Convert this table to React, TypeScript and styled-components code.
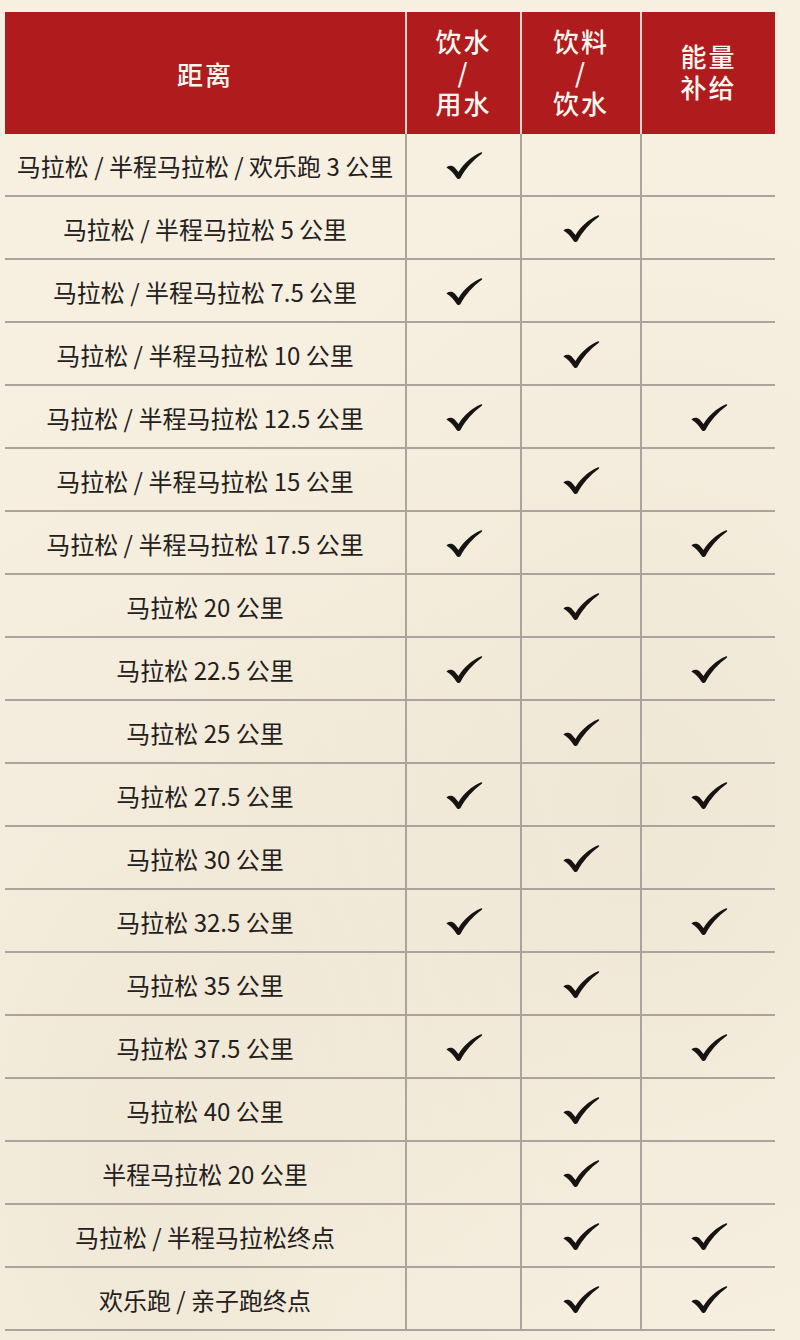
import React from "react";
import styled, { createGlobalStyle } from "styled-components";

const Global = createGlobalStyle`
  html, body { margin: 0; padding: 0; }
  body {
    background: #f7f0e1;
    font-family: "Noto Sans CJK SC", "Noto Sans", sans-serif;
  }
`;

const Page = styled.div`
  width: 800px;
  height: 1340px;
  box-sizing: border-box;
  padding: 12px 25px 0 5px;
  background:
    radial-gradient(ellipse at 80% 60%, rgba(225, 214, 190, 0.35), transparent 55%),
    radial-gradient(ellipse at 20% 85%, rgba(225, 214, 190, 0.3), transparent 50%),
    #f7f0e1;
  overflow: hidden;
`;

const Table = styled.div`
  width: 770px;
  display: flex;
  flex-direction: column;
`;

const cols = "400px 115px 120px 135px";

const HeaderRow = styled.div`
  display: grid;
  grid-template-columns: ${cols};
  height: 122px;
  background: #b01b1d;
`;

const HeadCell = styled.div<{ $first?: boolean }>`
  display: flex;
  align-items: center;
  justify-content: center;
  text-align: center;
  color: #fdf7f0;
  font-size: 26px;
  font-weight: 500;
  line-height: 31px;
  letter-spacing: 2px;
  border-left: ${(p) => (p.$first ? "none" : "2px solid #e9d6cf")};
  padding-bottom: ${(p) => (p.$first ? "0" : "4px")};
`;

const Row = styled.div`
  display: grid;
  grid-template-columns: ${cols};
  height: 63px;
  border-bottom: 2px solid #aaa59c;
  box-sizing: border-box;
`;

const Cell = styled.div<{ $first?: boolean }>`
  display: flex;
  align-items: center;
  justify-content: center;
  border-left: ${(p) => (p.$first ? "none" : "2px solid #aaa59c")};
  color: #24201c;
  font-size: 24px;
  font-weight: 400;
  padding-top: 2px;
  white-space: nowrap;
`;

const Check = () => (
  <svg width="38" height="29" viewBox="0 0 40 30">
    <path
      d="M2 16.5 C4.5 14.5 8 14.8 10.2 17 L14.2 21.8 C20 12.5 28 5.2 37.5 1.2 C39.2 0.6 39.8 1.8 38.4 2.9 C29.5 9.5 21.5 18.5 16.6 27.6 C15.6 29.6 13.2 29.7 12.1 27.8 C9.3 23.3 5.8 19.6 2.2 17.6 C1.6 17.3 1.5 16.9 2 16.5 Z"
      fill="#161412"
    />
  </svg>
);

type R = [string, boolean, boolean, boolean];
const rows: R[] = [
  ["马拉松 / 半程马拉松 / 欢乐跑 3 公里", true, false, false],
  ["马拉松 / 半程马拉松 5 公里", false, true, false],
  ["马拉松 / 半程马拉松 7.5 公里", true, false, false],
  ["马拉松 / 半程马拉松 10 公里", false, true, false],
  ["马拉松 / 半程马拉松 12.5 公里", true, false, true],
  ["马拉松 / 半程马拉松 15 公里", false, true, false],
  ["马拉松 / 半程马拉松 17.5 公里", true, false, true],
  ["马拉松 20 公里", false, true, false],
  ["马拉松 22.5 公里", true, false, true],
  ["马拉松 25 公里", false, true, false],
  ["马拉松 27.5 公里", true, false, true],
  ["马拉松 30 公里", false, true, false],
  ["马拉松 32.5 公里", true, false, true],
  ["马拉松 35 公里", false, true, false],
  ["马拉松 37.5 公里", true, false, true],
  ["马拉松 40 公里", false, true, false],
  ["半程马拉松 20 公里", false, true, false],
  ["马拉松 / 半程马拉松终点", false, true, true],
  ["欢乐跑 / 亲子跑终点", false, true, true],
];

export default function App() {
  return (
    <>
      <Global />
      <Page>
        <Table>
          <HeaderRow>
            <HeadCell $first>距离</HeadCell>
            <HeadCell>
              <div>
                饮水
                <br />/<br />
                用水
              </div>
            </HeadCell>
            <HeadCell>
              <div>
                饮料
                <br />/<br />
                饮水
              </div>
            </HeadCell>
            <HeadCell>
              <div>
                能量
                <br />
                补给
              </div>
            </HeadCell>
          </HeaderRow>
          {rows.map(([label, a, b, c]) => (
            <Row key={label}>
              <Cell $first>{label}</Cell>
              <Cell>{a && <Check />}</Cell>
              <Cell>{b && <Check />}</Cell>
              <Cell>{c && <Check />}</Cell>
            </Row>
          ))}
        </Table>
      </Page>
    </>
  );
}
